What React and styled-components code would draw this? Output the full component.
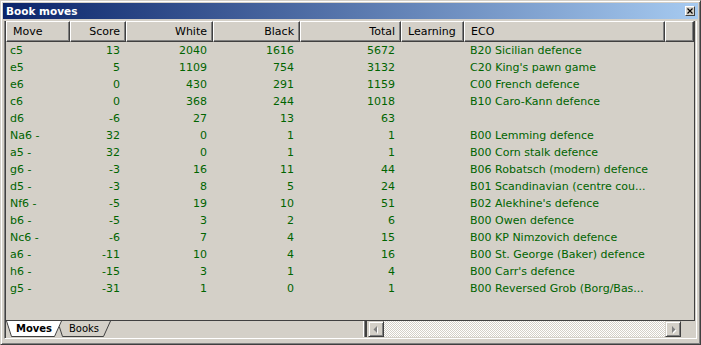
import React from 'react';
import styled, { createGlobalStyle } from 'styled-components';

const GlobalStyle = createGlobalStyle`
  html, body { margin: 0; padding: 0; background: #d4d0c8; }
  body { font-family: "DejaVu Sans", "Liberation Sans", sans-serif; font-size: 11px; }
  * { box-sizing: border-box; }
`;

const COLS = '64px 56px 87px 87px 101px 63px 201px 29px';
const GREEN = '#006400';

const Window = styled.div`
  width: 701px;
  height: 345px;
  background: #d4d0c8;
  border: 1px solid;
  border-color: #d4d0c8 #404040 #404040 #d4d0c8;
  box-shadow: inset 1px 1px #ffffff, inset -1px -1px #808080;
  padding: 2px;
  display: flex;
  flex-direction: column;
`;

const TitleBar = styled.div`
  height: 16px;
  flex: none;
  display: flex;
  align-items: center;
  justify-content: space-between;
  padding: 0 3px;
  background: linear-gradient(to right, #0a246a, #a6caf0);
  color: #ffffff;
  font-family: "DejaVu Sans", sans-serif;
  font-weight: bold;
  font-size: 10.5px;
`;

const CloseButton = styled.div`
  width: 10px;
  height: 10px;
  background: #d4d0c8;
  border: 1px solid;
  border-color: #ffffff #404040 #404040 #ffffff;
  display: flex;
  align-items: center;
  justify-content: center;
`;

const Frame = styled.div`
  flex: 1;
  margin: 2px 1px 3px;
  display: flex;
  flex-direction: column;
  border-left: 1px solid #808080;
  border-right: 1px solid #ffffff;
  border-bottom: 1px solid #ffffff;
  padding: 0 1px;
  box-shadow: inset 1px 0 #404040, inset -1px 0 #d4d0c8;
  min-height: 0;
`;

const ListArea = styled.div`
  flex: 1;
  display: flex;
  flex-direction: column;
  border-right: 1px solid #404040;
  border-bottom: 1px solid #404040;
  overflow: hidden;
`;

const HeaderRow = styled.div`
  display: grid;
  grid-template-columns: ${COLS};
  height: 21px;
  flex: none;
`;

const HeaderCell = styled.div`
  border: 1px solid;
  border-color: #ffffff #404040 #404040 #ffffff;
  box-shadow: inset -1px -1px #808080;
  padding: 1px 5px 0 6px;
  line-height: 18px;
  text-align: ${(p) => p.$align};
  color: #000000;
  white-space: nowrap;
  overflow: hidden;
`;

const Row = styled.div`
  display: grid;
  grid-template-columns: ${COLS};
  height: 17px;
  line-height: 18px;
  color: ${GREEN};
  flex: none;
`;

const Cell = styled.div`
  text-align: ${(p) => p.$align};
  padding: ${(p) => (p.$align === 'right' ? '0 6px 0 0' : `0 0 0 ${p.$pad}px`)};
  white-space: nowrap;
  overflow: hidden;
`;

const BottomStrip = styled.div`
  height: 17px;
  flex: none;
  display: flex;
`;

const Tabs = styled.div`
  width: 357px;
  display: flex;
  height: 16px;
`;

const Tab = styled.div`
  position: relative;
  width: ${(p) => p.$w}px;
  height: 16px;
  margin-left: ${(p) => p.$ml}px;
  z-index: ${(p) => (p.$active ? 2 : 1)};
  display: flex;
  align-items: center;
  justify-content: center;
  font-size: 10px;
  font-weight: ${(p) => (p.$active ? 'bold' : 'normal')};
  color: #000000;
`;

const TabShape = styled.svg`
  position: absolute;
  left: 0;
  top: 0;
`;

const TabLabel = styled.span`
  position: relative;
  line-height: 14px;
  margin-top: -1px;
`;

const Splitter = styled.div`
  width: 5px;
  height: 16px;
  border-left: 1px solid #ffffff;
  border-right: 1px solid #d4d0c8;
  background: #404040;
  box-shadow: inset 1px 0 #808080;
`;

const ScrollButton = styled.div`
  width: 16px;
  height: 16px;
  background: #d4d0c8;
  border: 1px solid;
  border-color: #d4d0c8 #404040 #404040 #d4d0c8;
  box-shadow: inset 1px 1px #ffffff, inset -1px -1px #808080;
  display: flex;
  align-items: center;
  justify-content: center;
`;

const Track = styled.div`
  flex: 1;
  height: 16px;
  background: repeating-conic-gradient(#d4d0c8 0 25%, #ffffff 0 50%) 0 0 / 2px 2px;
`;

const Corner = styled.div`
  width: 14px;
`;

const columns = [
  { label: 'Move', align: 'left', pad: 4 },
  { label: 'Score', align: 'right' },
  { label: 'White', align: 'right' },
  { label: 'Black', align: 'right' },
  { label: 'Total', align: 'right' },
  { label: 'Learning', align: 'left', pad: 6 },
  { label: 'ECO', align: 'left', pad: 6 },
  { label: '', align: 'left', pad: 6 },
];

const rows = [
  ['c5', '13', '2040', '1616', '5672', '', 'B20 Sicilian defence'],
  ['e5', '5', '1109', '754', '3132', '', "C20 King's pawn game"],
  ['e6', '0', '430', '291', '1159', '', 'C00 French defence'],
  ['c6', '0', '368', '244', '1018', '', 'B10 Caro-Kann defence'],
  ['d6', '-6', '27', '13', '63', '', ''],
  ['Na6 -', '32', '0', '1', '1', '', 'B00 Lemming defence'],
  ['a5 -', '32', '0', '1', '1', '', 'B00 Corn stalk defence'],
  ['g6 -', '-3', '16', '11', '44', '', 'B06 Robatsch (modern) defence'],
  ['d5 -', '-3', '8', '5', '24', '', 'B01 Scandinavian (centre cou...'],
  ['Nf6 -', '-5', '19', '10', '51', '', "B02 Alekhine's defence"],
  ['b6 -', '-5', '3', '2', '6', '', 'B00 Owen defence'],
  ['Nc6 -', '-6', '7', '4', '15', '', 'B00 KP Nimzovich defence'],
  ['a6 -', '-11', '10', '4', '16', '', 'B00 St. George (Baker) defence'],
  ['h6 -', '-15', '3', '1', '4', '', "B00 Carr's defence"],
  ['g5 -', '-31', '1', '0', '1', '', 'B00 Reversed Grob (Borg/Bas...'],
];

function TabItem({ label, w, ml, active }) {
  const pts = `0,0 5,15 ${w - 7},15 ${w},0`;
  return (
    <Tab $w={w} $ml={ml} $active={active}>
      <TabShape width={w} height={16} viewBox={`0 0 ${w} 16`}>
        <polygon points={pts} fill={active ? '#ffffff' : '#d4d0c8'} />
        <polyline
          points={`0.5,0 5.5,15.5 ${w - 7.5},15.5 ${w - 0.5},0`}
          fill="none"
          stroke="#404040"
          strokeWidth="1"
        />
      </TabShape>
      <TabLabel>{label}</TabLabel>
    </Tab>
  );
}

function Arrow({ dir }) {
  const pts = dir === 'left' ? '8,4 8,11 4.5,7.5' : '6,4 6,11 9.5,7.5';
  const shadow = dir === 'left' ? '9,5 9,12 5.5,8.5' : '7,5 7,12 10.5,8.5';
  return (
    <svg width="14" height="14" viewBox="0 0 14 14">
      <polygon points={shadow} fill="#ffffff" />
      <polygon points={pts} fill="#808080" />
    </svg>
  );
}

export default function App() {
  return (
    <>
      <GlobalStyle />
      <Window>
        <TitleBar>
          <span>Book moves</span>
          <CloseButton>
            <svg width="8" height="8" viewBox="0 0 8 8">
              <path d="M1.5,1.5 L6.5,6.5 M6.5,1.5 L1.5,6.5" stroke="#000" strokeWidth="1.2" />
            </svg>
          </CloseButton>
        </TitleBar>
        <Frame>
          <ListArea>
            <HeaderRow>
              {columns.map((c, i) => (
                <HeaderCell key={i} $align={c.align}>
                  {c.label}
                </HeaderCell>
              ))}
            </HeaderRow>
            {rows.map((r, i) => (
              <Row key={i}>
                {columns.map((c, j) => (
                  <Cell key={j} $align={c.align} $pad={c.pad}>
                    {r[j] || ''}
                  </Cell>
                ))}
              </Row>
            ))}
          </ListArea>
          <BottomStrip>
            <Tabs>
              <TabItem label="Moves" w={56} ml={0} active />
              <TabItem label="Books" w={54} ml={-5} />
            </Tabs>
            <Splitter />
            <ScrollButton>
              <Arrow dir="left" />
            </ScrollButton>
            <Track />
            <ScrollButton>
              <Arrow dir="right" />
            </ScrollButton>
            <Corner />
          </BottomStrip>
        </Frame>
      </Window>
    </>
  );
}
